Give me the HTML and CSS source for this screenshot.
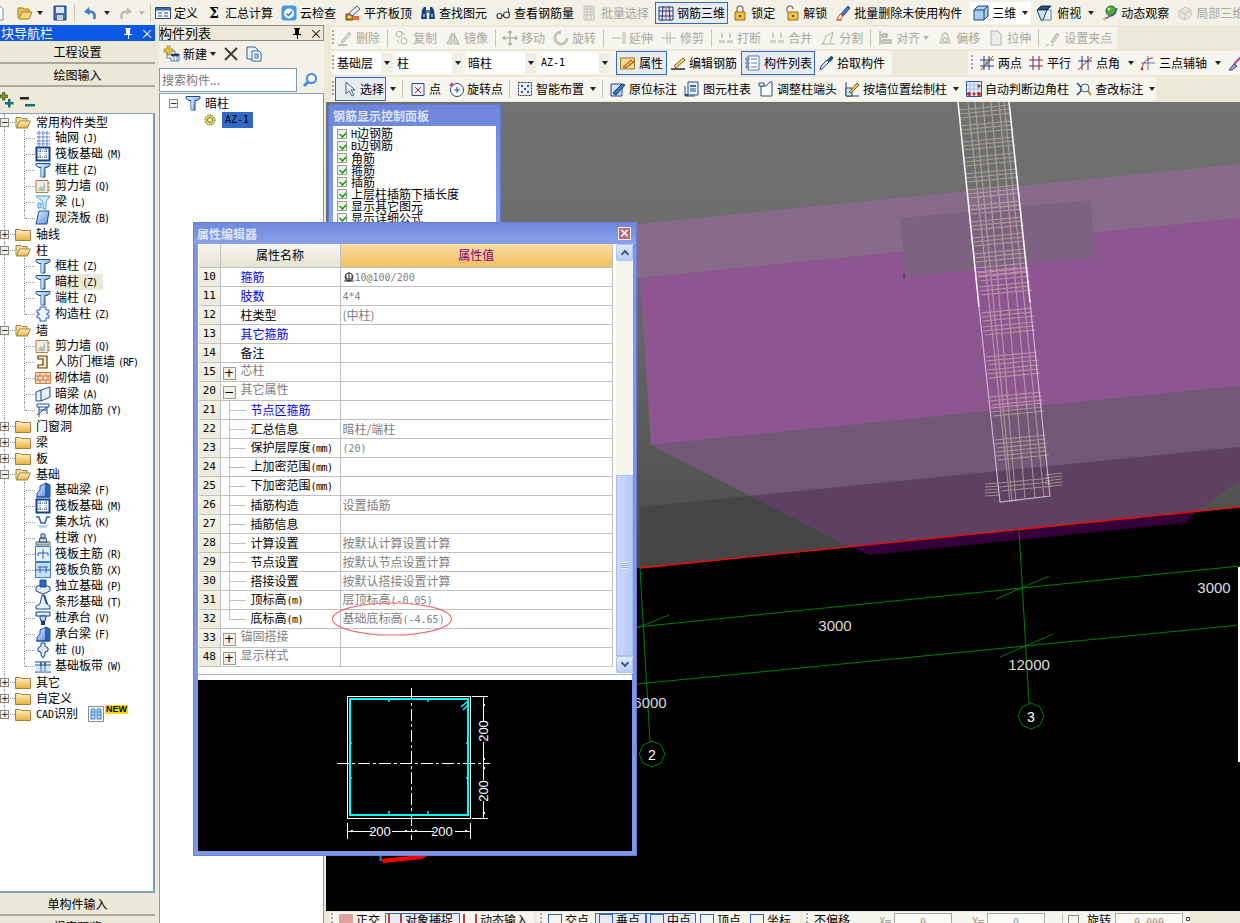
FILE: index.html
```html
<!DOCTYPE html>
<html lang="zh">
<head>
<meta charset="utf-8">
<title>钢筋三维</title>
<link rel="stylesheet" href="styles.css">
</head>
<body>
<svg class="defs" width="0" height="0">
<defs>
<linearGradient id="fy" x1="0" y1="0" x2="0" y2="1"><stop offset="0" stop-color="#fff3c4"/><stop offset="1" stop-color="#e8b040"/></linearGradient>
<linearGradient id="bl" x1="0" y1="0" x2="1" y2="1"><stop offset="0" stop-color="#e4f0fc"/><stop offset="1" stop-color="#5a90d8"/></linearGradient>
<g id="pinx"><path d="M3 1h6v1H8v5h2v1H7v4H6V8H2V7h2V2H3z" fill="currentColor"/></g>
<g id="new"><path d="M3 1h7l3 3v11H3z" fill="#fff" stroke="#7a8aa0"/></g>
<g id="open"><path d="M1 13V3h5l1 1h5v3" fill="#e8c060" stroke="#a07820"/><path d="M2 14l3-7h10l-3 7z" fill="#ffd97a" stroke="#a07820"/></g>
<g id="fc"><path d="M.5 3.500h5l1 1h9v10H.5z" fill="url(#fy)" stroke="#a08040"/></g>
<g id="fo"><path d="M1 13V3.500h5l1 1h5V7" fill="#f4dc9c" stroke="#a08040"/><path d="M1.500 14l3-7h11l-3 7z" fill="url(#fy)" stroke="#a08040"/></g>
<g id="save"><path d="M2 1h12v14H2z" fill="#3f6fb0" stroke="#1d3f7a"/><path d="M4 2h8v6H4z" fill="#dfe9f6"/><path d="M5 10h6v5H5z" fill="#c8d0dc"/></g>
<g id="undo"><path d="M12 14c2-5-1-9-7-7" fill="none" stroke="#3a7ac8" stroke-width="2.500"/><path d="M7 2L2 7l6 3z" fill="#3a7ac8"/></g>
<g id="redo"><path d="M4 14C2 9 5 5 11 7" fill="none" stroke="#bfbfb6" stroke-width="2.500"/><path d="M9 2l5 5-6 3z" fill="#bfbfb6"/></g>
<g id="def"><path d="M.5 2.500h15v11H.5z" fill="#f4f6fa" stroke="#2a4a80"/><path d="M1 3h14v2.500H1z" fill="#3a6cb0"/><path d="M3 8h4M3 11h4M9 8h4M9 11h4" stroke="#2a4a80"/></g>
<g id="cloud"><rect x=".5" y=".5" width="15" height="15" rx="3" fill="#3f9ae8"/><circle cx="8" cy="8.500" r="5" fill="#fff"/><path d="M5.500 8.500l2 2 3.500-4" fill="none" stroke="#1f70c8" stroke-width="1.500"/></g>
<g id="flat"><path d="M1 9h7v6H1z" fill="#c88a30" stroke="#704010"/><path d="M4 8l8-7 3 3-8 7z" fill="#e8eef8" stroke="#40608c"/><path d="M9 11h5v4H9z" fill="#e86a30"/><path d="M3 11h3v2H3z" fill="#f8e070"/></g>
<g id="bino"><path d="M2 5l2-3h2v3l1 9H1zM14 5l-2-3h-2v3l-1 9h6z" fill="#1f3f7a"/><path d="M6 5h4v3H6z" fill="#4f7ab8"/><path d="M3 9h2v3H3zM11 9h2v3h-2z" fill="#7fa4d8"/></g>
<g id="glass"><circle cx="4.500" cy="11" r="2.500" fill="#fff" stroke="#333" stroke-width="1.200"/><circle cx="11.500" cy="10" r="3" fill="#fff" stroke="#333" stroke-width="1.200"/><path d="M7 10.500h2M14 8l-1-5" stroke="#333" fill="none"/></g>
<g id="gbatch"><path d="M2 1h10v14H2z" fill="#e8e8e0" stroke="#c4c4bc"/><path d="M2 4h10M2 7h10M2 10h10M5 1v14M9 1v14" stroke="#c4c4bc"/></g>
<g id="rb"><path d="M1 2h14v13H1z" fill="none" stroke="#1f3a80"/><path d="M1 6h14M1 11h14M5 1l-1 15M11 1l1 15" stroke="#1f3a80"/><path d="M8 2v13" stroke="#b03030"/></g>
<g id="lock"><path d="M5 7V4a3 3 0 016 0v3" fill="none" stroke="#8a8a8a" stroke-width="1.500"/><path d="M3 7h10v8H3z" fill="#f0c050" stroke="#9a7010"/><path d="M8 10v2" stroke="#704000" stroke-width="2"/></g>
<g id="ulock"><path d="M3 7V4a3 3 0 016 0" fill="none" stroke="#8a8a8a" stroke-width="1.500"/><path d="M4 7h10v8H4z" fill="#f0c050" stroke="#9a7010"/><path d="M9 10v2" stroke="#704000" stroke-width="2"/></g>
<g id="bdel"><path d="M6 9l7-8 2 2-7 8z" fill="#4f7ad0" stroke="#1f3f90"/><path d="M2 14l3-5 3 2-3 4z" fill="#f8f0d0" stroke="#b06030"/><path d="M1 15h6" stroke="#d04040"/></g>
<g id="cube"><path d="M1 5l4-4h10v10l-4 4H1z" fill="#a8d0ec" stroke="#1f3f70"/><path d="M1 5h10v10M11 5l4-4" fill="none" stroke="#1f3f70"/></g>
<g id="cubt"><path d="M5 5h10v10H5z" fill="#eef5fc" stroke="#5080b0"/><path d="M1 5l4-4h10l-4 4z" fill="#1f4f80" stroke="#102f50"/><path d="M1 5h10l-4 10H5z" fill="#cfe4f6" stroke="#1f3f70"/></g>
<g id="orb"><circle cx="9" cy="6" r="5" fill="#50a838" stroke="#286018"/><circle cx="7" cy="4" r="1.500" fill="#c8e8a0"/><path d="M2 14C4 13 14 10 15 3" fill="none" stroke="#4060a0" stroke-width="1.500"/><circle cx="2.500" cy="14" r="1.500" fill="#e0c040"/></g>
<g id="l3d"><path d="M2 6l6-4 6 3v6l-6 4-6-3z" fill="#e6e6de" stroke="#c4c4bc"/><path d="M2 6l6 3 6-4M8 9v6" fill="none" stroke="#c4c4bc"/></g>
<g id="gdel"><path d="M4 12l8-10 2 2-8 9z" fill="#d8d8d0" stroke="#bcbcb4"/><path d="M1 15h9" stroke="#bcbcb4" stroke-width="2"/></g>
<g id="gcopy" fill="none" stroke="#b4b4ac"><circle cx="5" cy="4" r="3"/><circle cx="10" cy="11" r="3"/><path d="M8 2l3 3M3 10l2 3"/></g>
<g id="gmir" fill="#d8d8d0" stroke="#b4b4ac"><path d="M7 3L2 14h5zM9 3l5 11H9z"/></g>
<g id="gmov" fill="none" stroke="#b4b4ac" stroke-width="1.500"><path d="M8 1v14M1 8h14M6 3l2-2 2 2M6 13l2 2 2-2M3 6L1 8l2 2M13 6l2 2-2 2"/></g>
<g id="grot"><path d="M8 2a6 6 0 106 6" fill="none" stroke="#c4c4bc" stroke-width="3"/></g>
<g id="gext" fill="none" stroke="#b4b4ac"><path d="M2 8h9M13 2v12M15 2v12"/></g>
<g id="gtrm" fill="none" stroke="#b4b4ac"><path d="M1 8h14M6 2v12M9 2v12"/></g>
<g id="gbrk" fill="#d0d0c8"><path d="M1 10h6v3H1zM9 10h6v3H9zM3 3h2v5H3zM11 3h2v5h-2z"/></g>
<g id="gspl" fill="none" stroke="#b4b4ac"><path d="M1 14h14M3 14l3-8 7-4-3 12"/></g>
<g id="galn" fill="none" stroke="#b4b4ac" stroke-width="1.500"><path d="M3 1v14"/><path d="M5 4h5v3H5zM5 10h9v3H5z" fill="#d8d8d0"/></g>
<g id="goff" fill="none" stroke="#c4c4bc" stroke-width="1.500"><path d="M3 13l3-9a3 3 0 014 0l3 9z"/><circle cx="8" cy="10" r="2"/></g>
<g id="gstr" fill="#ececec" stroke="#b4b4ac"><path d="M3 1h7l3 3v11H3z"/></g>
<g id="ggrp" fill="none" stroke="#b4b4ac"><path d="M1 15h3M6 15h3"/><path d="M6 12l6-9 2 2-6 8z" fill="#d8d8d0"/></g>
<g id="prop"><path d="M.5 3h14v11H.5z" fill="#f8dc94" stroke="#a07820"/><path d="M3 12l8-7 3 2-8 6z" fill="#f0a040" stroke="#806020"/></g>
<g id="edit"><path d="M4 11l9-8 2 2-9 8z" fill="#f4d070" stroke="#806020"/><path d="M1 14h14" stroke="#222" stroke-width="1.500"/></g>
<g id="lst"><path d="M3 1h11v14H3z" fill="#fff" stroke="#5878a8"/><path d="M1 3h3v2H1zM1 7h3v2H1zM1 11h3v2H1z" fill="#c8d8f0" stroke="#5878a8"/><path d="M6 4h6M6 8h6M6 12h6" stroke="#5878a8"/></g>
<g id="pick"><path d="M2 15l1-4 6-6 2 2-6 6z" fill="#d0e4f8" stroke="#1f4f90"/><path d="M9 5l3-3a1.500 1.500 0 013 2l-3 3z" fill="#1f4f90"/></g>
<g id="p2" fill="none"><path d="M5 1v14M10 1v14M1 5h14M1 11h14" stroke="#2a3a90"/><path d="M2 15L14 1" stroke="#c02020"/><circle cx="8" cy="8" r="1.700" fill="#60a030"/></g>
<g id="par" fill="none"><path d="M1 5h14M1 11h14" stroke="#c02020"/><path d="M5 1v14M11 1v14" stroke="#2a3a90"/></g>
<g id="ang" fill="none"><path d="M5 1v14M11 1v14M1 6h14" stroke="#2a3a90"/><path d="M1 15L15 2" stroke="#c02020"/></g>
<g id="p3" fill="none"><path d="M2 15C2 8 7 3 13 3" stroke="#c02020"/><path d="M8 1v14M1 8h14" stroke="#2a3a90" stroke-width=".7"/><circle cx="2" cy="14" r="1.300" fill="#c02020"/></g>
<g id="cut2"><path d="M2 15l5-6 3 2-5 4z" fill="#a0b0e0" stroke="#2a3a90"/><path d="M7 9l7-7" stroke="#c040a0" stroke-width="2"/></g>
<g id="cur"><path d="M5 1v12l3-3 3 5 2-1-3-5h4z" fill="#f4f4f4" stroke="#40608c"/></g>
<g id="pt"><path d="M2 2.500h12v12H2z" fill="#eef4fc" stroke="#2a4a90"/><path d="M5 6l6 6M11 6l-6 6" stroke="#c02020"/></g>
<g id="rot"><circle cx="9" cy="9" r="6.500" fill="#fff" stroke="#1f3f80"/><path d="M9 6v6M6 9h6" stroke="#1f3f80"/><path d="M1 5l3-4 2 4z" fill="#d04040"/></g>
<g id="sm"><path d="M1.500 1.500h13v13h-13z" fill="#e8f0fa" stroke="#333" stroke-dasharray="2 1"/><path d="M4 4h2v2H4zM10 4h2v2h-2zM7 7h2v2H7zM4 10h2v2H4zM10 10h2v2h-2z" fill="#2a5aa0"/></g>
<g id="pos"><path d="M1 3h11v12H1z" fill="#d0e4f8" stroke="#1f3f80"/><path d="M3 12l9-9 3 1-9 10z" fill="#3080d0" stroke="#103060"/></g>
<g id="tbl"><path d="M4 1h10v13H4z" fill="#eaf2fc" stroke="#2a4a90"/><path d="M6 4h6v2H6z" fill="#3a6cb0"/><path d="M6 8h6M6 10h6" stroke="#2a4a90"/><path d="M1 5v10h10" fill="none" stroke="#2a4a90"/><path d="M1 13h3v2H1z" fill="#2a4a90"/></g>
<g id="adj"><path d="M3 5h5l4-4h2v14H3z" fill="#fff" stroke="#1f4a90"/><path d="M1 2h5v3H1z" fill="#fff" stroke="#1f4a90"/></g>
<g id="wal"><path d="M2 1v14h13" fill="none" stroke="#1f3f80"/><path d="M2 7h6v8H2z" fill="#d8e8f8" stroke="#1f3f80"/><path d="M5 11l8-9 2 2-8 8z" fill="#f0c050" stroke="#806020"/></g>
<g id="auto"><path d="M.5.5h15v15H.5z" fill="#eaf2fc" stroke="#2a5aa0"/><path d="M1 4h14M1 8h14M1 12h14M4 1v14M8 1v14M12 1v14" stroke="#9ab8e0"/><circle cx="3" cy="13" r="2" fill="#d02020"/><circle cx="13" cy="13" r="2" fill="#d02020"/><circle cx="8" cy="13" r="1.500" fill="#d02020"/><circle cx="13" cy="5" r="1.500" fill="#d02020"/></g>
<g id="chk"><path d="M1 2l4 4v4l-4 4" fill="none" stroke="#1f3f90" stroke-width="1.500"/><circle cx="9" cy="7" r="4" fill="#dff" stroke="#555"/><path d="M12 10l3 4" stroke="#c08030" stroke-width="2"/></g>
<g id="plusg"><path d="M0 3h2.500V.5H5V3h2.500v2.500H5V8H2.500V5.500H0z" fill="#7a9a20" stroke="#203010" stroke-width=".6"/><path d="M5 10h3V7h2.500v3h3v2.500h-3v3H8v-3H5z" fill="#0f7070"/></g>
<g id="mins"><path d="M1 5h9v2.500H1z" fill="#222"/><path d="M6 12h10v2.500H6z" fill="#0f7070"/></g>
<g id="col"><path d="M1 1.500h14v2l-3 2h-2v9.500H6V5.500H4l-3-2z" fill="url(#bl)" stroke="#1a4aa0"/><path d="M7 5.500V15" stroke="#fff"/></g>
<g id="gri" stroke="#2a5ac0" fill="none"><path d="M2 3h13M2 7h13M2 11h13M2 14h13M4 1v15M8 1v15M12 1v15" stroke-dasharray="1.500 .8"/></g>
<g id="raf" fill="none" stroke="#10408a"><path d="M1.500 1.500h13v13h-13z" stroke-width="2"/><path d="M5 3v10M11 3v10M3 5h10M3 11h10" stroke-dasharray="1 1"/></g>
<g id="wl"><path d="M1 2.500h12v12H1z" fill="#eeeae4" stroke="#c07840"/><path d="M3 13l2-5 2 2 3-6v9z" fill="#a8a8a8" opacity=".7"/><path d="M13 5h2M13 9h2M13 12h2" stroke="#c07840"/></g>
<g id="bm"><path d="M1 2h14l-4 6v7H8V8z" fill="#d4eafa" stroke="#4aa0d0"/><path d="M3 9h3v5H3z" fill="#cde" stroke="#4aa0d0"/></g>
<g id="slb"><path d="M4 1h10l-2 13H1z" fill="url(#bl)" stroke="#1a4aa0"/></g>
<g id="gz"><path d="M5 1h6v3h3v3h-2v2h2v3h-3v3H5v-3H2V9h2V7H2V4h3z" fill="#eef4fc" stroke="#2a5ac0"/></g>
<g id="frm"><path d="M3 2h9v12H3v-3h5V5H3z" fill="#f8e8c0" stroke="#5a3a10" stroke-width="1.200"/></g>
<g id="brk" fill="#f8e0c8" stroke="#d07838"><path d="M.5 2.500h15v11H.5zM.5 6h15M.5 10h15M5 2.500V6M11 2.500V6M8 6v4M3 6v4M13 6v4M5 10v3.500M11 10v3.500"/></g>
<g id="hbm"><path d="M1 6l5-2 9-3v10l-9 4H1z" fill="#e4eef8" stroke="#2a4a80"/><path d="M6 4v11" stroke="#2a4a80"/></g>
<g id="rf" fill="none" stroke="#1a4aa0"><path d="M2 2h12v3H2zM4 5v10M12 5v7M2 13l10-8M4 8h8"/></g>
<g id="fbm"><path d="M2 15v-4l3-3V4l6-3v14z" fill="url(#bl)" stroke="#1a4aa0"/><path d="M11 1l4 2v12h-4z" fill="#2a6ac0" stroke="#1a4aa0"/><path d="M1 15h14" stroke="#1a4aa0"/></g>
<g id="pit"><path d="M1 3h3l2 6h4l2-6h3" fill="none" stroke="#2a5ac0" stroke-width="1.500"/><path d="M2 11h12l-3 3H5z" fill="#bcd4f0"/></g>
<g id="pr"><path d="M1 12h14v3H1z" fill="#c8c8c8" stroke="#666"/><path d="M5 8h6l1 4H4zM6 4h4v4H6z" fill="#c0d8f0" stroke="#2a4a80"/></g>
<g id="mn"><path d="M.5.5h15v15H.5z" fill="#eaf2fc" stroke="#3a7ad0"/><path d="M8 3v10M3 7h10M3 7v3M13 7v3" stroke="#2a5ac0" fill="none"/></g>
<g id="ng"><path d="M.5.5h15v15H.5z" fill="#c8dcf4" stroke="#3a7ad0"/><path d="M1 8h14M5 5v6M11 5v6M3 5h10" stroke="#2a5ac0" fill="none"/></g>
<g id="ind"><path d="M1 9l6-3 8 3v4l-7 3-7-3z" fill="#e4eef8" stroke="#1a4aa0"/><path d="M5 2h6v7H5z" fill="#2a6ac0" stroke="#1a4aa0"/></g>
<g id="stp"><path d="M1 15v-3l4-2 2-9h2l3 9 3 2v3z" fill="#e8f2fc" stroke="#1a4aa0"/><path d="M9 1l3 9" stroke="#1a4aa0" stroke-width="2"/></g>
<g id="cap"><path d="M1 2h14v4H1z" fill="#e4eef8" stroke="#10408a"/><path d="M5 6h6v2l-1 3H6L5 8z" fill="#bcd4f0" stroke="#10408a"/><path d="M6 11h4v4H6z" fill="#10408a"/></g>
<g id="pl"><path d="M6 1h4v3l3 2v3l-3 1v3l-2 3-2-3v-3L3 9V6l3-2z" fill="#dce8f8" stroke="#10408a"/></g>
<g id="bnd"><path d="M0 4h16M0 7h16M0 14h16" stroke="#10408a"/><path d="M6 4v10M10 4v10" stroke="#2a6ac0" stroke-width="2"/><path d="M1 8h14v6H1z" fill="#bcd4f0" opacity=".6"/></g>
<g id="cad"><path d="M.5.5h15v15H.5z" fill="#fff" stroke="#888"/><path d="M3 3h4v10H3zM9 3h4v10H9z" fill="#bcd8f4" stroke="#3a7ad0"/><path d="M3 6h4M3 9h4M9 6h4M9 9h4" stroke="#3a7ad0"/></g>
<g id="gear"><circle cx="8" cy="8" r="5" fill="#f4e040" stroke="#444" stroke-dasharray="1.500 1"/><circle cx="8" cy="8" r="2.500" fill="#fff8a0" stroke="#666"/></g>
<g id="mnew"><path d="M3 5h8v3h4v7H7v-3H3z" fill="#fff" stroke="#5878a8"/><path d="M7 8h8v2H7zM10 10v5M13 10v5" stroke="#5878a8"/><path d="M3 0h3v3h3v3H6v3H3V6H0V3h3z" fill="#e8c030" stroke="#907010" stroke-width=".6"/></g>
<g id="xx"><path d="M2 2l12 12M14 2L2 14" stroke="#404040" stroke-width="2"/></g>
<g id="cpy"><path d="M1 1h8l3 3v9H1z" fill="#eaf2fc" stroke="#3060a0"/><path d="M6 5h7l2 2v8H6z" fill="#fff" stroke="#3060a0"/><path d="M8 8h5M8 10h5M8 12h5" stroke="#3060a0"/></g>
<g id="srch"><circle cx="9.500" cy="6.500" r="4.500" fill="#fff" stroke="#3a8ae0" stroke-width="2"/><path d="M6 10l-4 4" stroke="#3a8ae0" stroke-width="3"/></g>
</defs>
</svg>

<div class="app">

  <header class="top">
    <svg class="ic first"><use href="#new"/></svg>
    <svg class="ic q-open"><use href="#open"/></svg><i class="dd q-d1"></i>
    <svg class="ic q-save"><use href="#save"/></svg><i class="sep q-s1"></i>
    <svg class="ic q-undo"><use href="#undo"/></svg><i class="dd q-d2"></i>
    <svg class="ic q-redo"><use href="#redo"/></svg><i class="dd dim q-d3"></i><i class="sep q-s2"></i>
    <span class="it q-def"><svg class="ic"><use href="#def"/></svg>定义</span>
    <span class="it q-sig"><b class="sig">Σ</b>汇总计算</span>
    <span class="it"><svg class="ic"><use href="#cloud"/></svg>云检查</span>
    <span class="it q-g9"><svg class="ic"><use href="#flat"/></svg>平齐板顶</span>
    <span class="it"><svg class="ic"><use href="#bino"/></svg>查找图元</span>
    <span class="it"><svg class="ic"><use href="#glass"/></svg>查看钢筋量</span>
    <span class="it dis"><svg class="ic"><use href="#gbatch"/></svg>批量选择</span>
    <span class="it on q-on"><svg class="ic"><use href="#rb"/></svg>钢筋三维</span>
    <span class="it q-g4"><svg class="ic"><use href="#lock"/></svg>锁定</span>
    <span class="it q-g9"><svg class="ic"><use href="#ulock"/></svg>解锁</span>
    <span class="it"><svg class="ic"><use href="#bdel"/></svg>批量删除未使用构件</span>
    <span class="it box"><svg class="ic"><use href="#cube"/></svg>三维<i class="dd"></i></span>
    <span class="it fus"><svg class="ic"><use href="#cubt"/></svg>俯视<i class="dd"></i></span>
    <span class="it q-g5"><svg class="ic"><use href="#orb"/></svg>动态观察</span>
    <span class="it dis"><svg class="ic"><use href="#l3d"/></svg>局部三维</span>
  </header>

  <div class="main">
    <aside class="nav">
      <div class="cap blue"><span class="cap-t clip">块导航栏</span><svg class="pin"><use href="#pinx"/></svg><span class="cls">×</span></div>
      <div class="navbtn">工程设置</div>
      <div class="navbtn">绘图输入</div>
      <div class="navtools"><svg class="ic"><use href="#plusg"/></svg><svg class="ic"><use href="#mins"/></svg></div>
      <div class="tree">
        <div class="root"><i class="ex">−</i><svg class="ic"><use href="#fo"/></svg><span>常用构件类型</span></div>
        <div class="kids">
          <div class="leaf"><svg class="ic"><use href="#gri"/></svg><span>轴网<em>(J)</em></span></div>
          <div class="leaf"><svg class="ic"><use href="#raf"/></svg><span>筏板基础<em>(M)</em></span></div>
          <div class="leaf"><svg class="ic"><use href="#col"/></svg><span>框柱<em>(Z)</em></span></div>
          <div class="leaf"><svg class="ic"><use href="#wl"/></svg><span>剪力墙<em>(Q)</em></span></div>
          <div class="leaf"><svg class="ic"><use href="#bm"/></svg><span>梁<em>(L)</em></span></div>
          <div class="leaf"><svg class="ic"><use href="#slb"/></svg><span>现浇板<em>(B)</em></span></div>
        </div>
        <div class="root"><i class="ex">+</i><svg class="ic"><use href="#fc"/></svg><span>轴线</span></div>
        <div class="root"><i class="ex">−</i><svg class="ic"><use href="#fo"/></svg><span>柱</span></div>
        <div class="kids">
          <div class="leaf"><svg class="ic"><use href="#col"/></svg><span>框柱<em>(Z)</em></span></div>
          <div class="leaf"><svg class="ic"><use href="#col"/></svg><span class="cur">暗柱<em>(Z)</em></span></div>
          <div class="leaf"><svg class="ic"><use href="#col"/></svg><span>端柱<em>(Z)</em></span></div>
          <div class="leaf"><svg class="ic"><use href="#gz"/></svg><span>构造柱<em>(Z)</em></span></div>
        </div>
        <div class="root"><i class="ex">−</i><svg class="ic"><use href="#fo"/></svg><span>墙</span></div>
        <div class="kids">
          <div class="leaf"><svg class="ic"><use href="#wl"/></svg><span>剪力墙<em>(Q)</em></span></div>
          <div class="leaf"><svg class="ic"><use href="#frm"/></svg><span>人防门框墙<em>(RF)</em></span></div>
          <div class="leaf"><svg class="ic"><use href="#brk"/></svg><span>砌体墙<em>(Q)</em></span></div>
          <div class="leaf"><svg class="ic"><use href="#hbm"/></svg><span>暗梁<em>(A)</em></span></div>
          <div class="leaf"><svg class="ic"><use href="#rf"/></svg><span>砌体加筋<em>(Y)</em></span></div>
        </div>
        <div class="root"><i class="ex">+</i><svg class="ic"><use href="#fc"/></svg><span>门窗洞</span></div>
        <div class="root"><i class="ex">+</i><svg class="ic"><use href="#fc"/></svg><span>梁</span></div>
        <div class="root"><i class="ex">+</i><svg class="ic"><use href="#fc"/></svg><span>板</span></div>
        <div class="root"><i class="ex">−</i><svg class="ic"><use href="#fo"/></svg><span>基础</span></div>
        <div class="kids">
          <div class="leaf"><svg class="ic"><use href="#fbm"/></svg><span>基础梁<em>(F)</em></span></div>
          <div class="leaf"><svg class="ic"><use href="#raf"/></svg><span>筏板基础<em>(M)</em></span></div>
          <div class="leaf"><svg class="ic"><use href="#pit"/></svg><span>集水坑<em>(K)</em></span></div>
          <div class="leaf"><svg class="ic"><use href="#pr"/></svg><span>柱墩<em>(Y)</em></span></div>
          <div class="leaf"><svg class="ic"><use href="#mn"/></svg><span>筏板主筋<em>(R)</em></span></div>
          <div class="leaf"><svg class="ic"><use href="#ng"/></svg><span>筏板负筋<em>(X)</em></span></div>
          <div class="leaf"><svg class="ic"><use href="#ind"/></svg><span>独立基础<em>(P)</em></span></div>
          <div class="leaf"><svg class="ic"><use href="#stp"/></svg><span>条形基础<em>(T)</em></span></div>
          <div class="leaf"><svg class="ic"><use href="#cap"/></svg><span>桩承台<em>(V)</em></span></div>
          <div class="leaf"><svg class="ic"><use href="#fbm"/></svg><span>承台梁<em>(F)</em></span></div>
          <div class="leaf"><svg class="ic"><use href="#pl"/></svg><span>桩<em>(U)</em></span></div>
          <div class="leaf"><svg class="ic"><use href="#bnd"/></svg><span>基础板带<em>(W)</em></span></div>
        </div>
        <div class="root"><i class="ex">+</i><svg class="ic"><use href="#fc"/></svg><span>其它</span></div>
        <div class="root"><i class="ex">+</i><svg class="ic"><use href="#fc"/></svg><span>自定义</span></div>
        <div class="root last"><i class="ex">+</i><svg class="ic"><use href="#fc"/></svg><span><em class="plain">CAD</em>识别</span><svg class="ic cadic"><use href="#cad"/></svg><b class="newb">NEW</b></div>
      </div>
      <div class="navbtn low">单构件输入</div>
      <div class="navbtn low">报表预览</div>
    </aside>

    <section class="list">
      <div class="cap grey"><span class="cap-t">构件列表</span><svg class="pin"><use href="#pinx"/></svg><span class="cls">×</span></div>
      <div class="listtools">
        <span class="it"><svg class="ic"><use href="#mnew"/></svg>新建<i class="dd"></i></span>
        <svg class="ic"><use href="#xx"/></svg>
        <svg class="ic"><use href="#cpy"/></svg>
      </div>
      <div class="search"><div class="sinput">搜索构件...</div><svg class="ic sbtn"><use href="#srch"/></svg></div>
      <div class="ltree">
        <div class="lroot"><i class="ex">−</i><svg class="ic"><use href="#col"/></svg><span>暗柱</span></div>
        <div class="lkid"><svg class="ic gearic"><use href="#gear"/></svg><span class="sel"><em>AZ-1</em></span></div>
      </div>
    </section>

    <section class="work">
      <div class="bars">
        <div class="tb r2 dis">
          <i class="grip"></i>
          <span class="it"><svg class="ic"><use href="#gdel"/></svg>删除</span><i class="sep"></i>
          <span class="it"><svg class="ic"><use href="#gcopy"/></svg>复制</span>
          <span class="it"><svg class="ic"><use href="#gmir"/></svg>镜像</span><i class="sep"></i>
          <span class="it"><svg class="ic"><use href="#gmov"/></svg>移动</span>
          <span class="it"><svg class="ic"><use href="#grot"/></svg>旋转</span><i class="sep"></i>
          <span class="it"><svg class="ic"><use href="#gext"/></svg>延伸</span>
          <span class="it"><svg class="ic"><use href="#gtrm"/></svg>修剪</span><i class="sep"></i>
          <span class="it"><svg class="ic"><use href="#gbrk"/></svg>打断</span>
          <span class="it"><svg class="ic"><use href="#gbrk"/></svg>合并</span>
          <span class="it"><svg class="ic"><use href="#gspl"/></svg>分割</span><i class="sep"></i>
          <span class="it"><svg class="ic"><use href="#galn"/></svg>对齐<i class="dd dim"></i></span>
          <span class="it"><svg class="ic"><use href="#goff"/></svg>偏移</span>
          <span class="it"><svg class="ic"><use href="#gstr"/></svg>拉伸</span><i class="sep"></i>
          <span class="it"><svg class="ic"><use href="#ggrp"/></svg>设置夹点</span>
        </div>
        <div class="rowpair">
          <div class="tb r3">
            <i class="grip"></i>
            <div class="combo c1">基础层<i class="cb"><i class="dd"></i></i></div>
            <div class="combo c2">柱<i class="cb"><i class="dd"></i></i></div>
            <div class="combo c3">暗柱<i class="cb"><i class="dd"></i></i></div>
            <div class="combo c4"><em>AZ-1</em><i class="cb"><i class="dd"></i></i></div>
            <span class="it on w51"><svg class="ic"><use href="#prop"/></svg>属性</span>
            <span class="it"><svg class="ic"><use href="#edit"/></svg>编辑钢筋</span>
            <span class="it on w74"><svg class="ic"><use href="#lst"/></svg>构件列表</span>
            <span class="it"><svg class="ic"><use href="#pick"/></svg>拾取构件</span>
          </div>
          <div class="tb r3b">
            <i class="grip"></i>
            <span class="it"><svg class="ic"><use href="#p2"/></svg>两点</span>
            <span class="it"><svg class="ic"><use href="#par"/></svg>平行</span>
            <span class="it"><svg class="ic"><use href="#ang"/></svg>点角<i class="dd"></i></span>
            <span class="it"><svg class="ic"><use href="#p3"/></svg>三点辅轴<i class="dd"></i></span>
            <svg class="ic"><use href="#cut2"/></svg>
          </div>
        </div>
        <div class="tb r4">
          <i class="grip"></i>
          <span class="it on sel1"><svg class="ic"><use href="#cur"/></svg>选择</span><i class="dd sd"></i><i class="sep"></i>
          <span class="it"><svg class="ic"><use href="#pt"/></svg>点</span>
          <span class="it"><svg class="ic"><use href="#rot"/></svg>旋转点</span><i class="sep"></i>
          <span class="it"><svg class="ic"><use href="#sm"/></svg>智能布置<i class="dd"></i></span><i class="sep"></i>
          <span class="it"><svg class="ic"><use href="#pos"/></svg>原位标注</span>
          <span class="it"><svg class="ic"><use href="#tbl"/></svg>图元柱表</span>
          <span class="it"><svg class="ic"><use href="#adj"/></svg>调整柱端头</span>
          <span class="it"><svg class="ic"><use href="#wal"/></svg>按墙位置绘制柱<i class="dd"></i></span>
          <span class="it"><svg class="ic"><use href="#auto"/></svg>自动判断边角柱</span>
          <span class="it"><svg class="ic"><use href="#chk"/></svg>查改标注<i class="dd"></i></span>
        </div>
      </div>

      <div class="canvas">
        <svg class="scene" viewBox="326 102 914 809" width="914" height="809">
          <defs>
            <linearGradient id="gbg" x1="0" y1="0" x2="0" y2="1"><stop offset="0" stop-color="#717171"/><stop offset=".35" stop-color="#6c6c6c"/><stop offset=".75" stop-color="#555"/><stop offset="1" stop-color="#464646"/></linearGradient>
          </defs>
          <rect x="326" y="102" width="914" height="809" fill="#000"/>
          <polygon points="326,102 1240,102 1240,507 326,600" fill="url(#gbg)"/>
          <polygon points="326,255 1240,164 1240,218 326,309" fill="#886b8b"/>
          <polygon points="640,278 1240,218 1240,386 651,445" fill="#8e5690"/>
          <polygon points="651,445 1240,386 1240,447 750,496" fill="#735776"/>
          <polygon points="640,507 750,496 850,547 640,568" fill="#454545"/>
          <polygon points="750,496 1240,447 1240,480 1197,511 850,547" fill="#5e4160"/>
          <polygon points="850,547 1197,511 1185,523 870,555" fill="#35003a"/>
          <polygon points="901,218 1091,200 1094,257 905,277" fill="#7d6281"/>
          <path d="M904 273v6" stroke="#6a3a70" stroke-width="2"/>
          <g class="rebar">
            <path d="M968 102l42 400M975 102l37 400M983 102l33 400M991 102l34 396M999 102l36 396M1004 102l40 395"/>
            <path id="stir" d="M958.800 110l51-5M960.500 126l51-5M962.200 142l51-5M963.900 158l51-5M965.600 174l51-5M967.200 190l51-5M968.900 206l51-5M970.600 222l51-5M972.300 238l51-5M974 254l51-5M975.500 268l51-5M977.700 273l51-5M979.400 287l51-5M981.500 313l51-5M982.900 327l51-5M986 357l51-5M987.300 370l51-5M990 397l51-5M991.100 408l51-5M994.500 440l51-5M995.800 452l51-5M999 483l51-5"/>
            <use href="#stir" x="0" y="4"/>
            <use href="#stir" x="2" y="8"/>
            <path d="M985 484l14-1M985 487l14-1M985 490l14-1M985 493l14-1M985 496l15-1M1045 475l17-2M1045 478l17-2M1045 481l17-2M1045 484l17-2M1045 487l17-2"/>
          </g>
          <path d="M979 307L1000 502l50-6L1030 302" class="edge"/>
          <path d="M958 102l21 205M1009 102l21 200" class="edgew"/>
          <path d="M640 568L1240 507" stroke="#f00" stroke-width="1.300"/>
          <g class="axis">
            <path d="M640 568l10 174M1019 530l10 173"/>
            <path d="M637 627L1240 566M637 684L1240 625"/>
            <path d="M637 628l32-13M996 599l53-23M1000 657l53-23"/>
            <polygon points="652,741 661,745 665,754 661,763 652,767 643,763 639,754 643,745"/>
            <polygon points="1031,703 1040,707 1044,716 1040,725 1031,729 1022,725 1018,716 1022,707"/>
          </g>
          <g class="nums">
            <text x="835" y="631">3000</text>
            <text x="1214" y="593">3000</text>
            <text x="1029" y="670">12000</text>
            <text x="650" y="708">6000</text>
            <text x="652" y="760" class="ax">2</text>
            <text x="1031" y="722" class="ax">3</text>
          </g>
          <polygon points="381,859 430,854 422,859 383,863" fill="#f00"/>
          <path d="M380.500 855v6" stroke="#08c" stroke-width="2"/>
          <path d="M1239 567v195" stroke="#fff" stroke-width="2"/>
        </svg>
      </div>

      <div class="status">
        <div class="tb s1">
          <i class="grip"></i>
          <span class="it"><span class="sq pk"></span>正交</span>
          <span class="it on w75"><span class="sq rd"></span>对象捕捉</span>
          <span class="it"><span class="sq rd"></span>动态输入</span>
        </div>
        <div class="tb s2">
          <i class="grip"></i>
          <span class="it st1"><span class="sq bl"></span>交点</span>
          <span class="it on st2"><span class="sq bl"></span>垂点</span>
          <span class="it on st3"><span class="sq bl"></span>中点</span>
          <span class="it st4"><span class="sq bl"></span>顶点</span>
          <span class="it st5"><span class="sq bl"></span>坐标</span>
        </div>
        <div class="tb s3">
          <i class="grip"></i>
          <span class="it sbox">不偏移</span>
          <span class="lab l1"><em>X=</em></span><span class="num"><em>0</em></span>
          <span class="lab l2"><em>Y=</em></span><span class="num"><em>0</em></span>
          <i class="sep"></i><span class="cbx"></span>
          <span class="rlab">旋转</span><span class="num wide2"><em>0.000</em></span><span class="tick"></span>
        </div>
      </div>
    </section>
  </div>

  <div class="panel">
    <div class="ptitle">钢筋显示控制面板</div>
    <ul class="plist">
      <li><i class="chk"></i><span><em>H</em>边钢筋</span></li>
      <li><i class="chk"></i><span><em>B</em>边钢筋</span></li>
      <li><i class="chk"></i><span>角筋</span></li>
      <li><i class="chk"></i><span>箍筋</span></li>
      <li><i class="chk"></i><span>插筋</span></li>
      <li><i class="chk"></i><span>上层柱插筋下插长度</span></li>
      <li><i class="chk"></i><span>显示其它图元</span></li>
      <li><i class="chk"></i><span>显示详细公式</span></li>
    </ul>
  </div>

  <div class="dlg">
    <div class="dtitle"><span>属性编辑器</span><i class="dclose">×</i></div>
    <div class="dbody">
      <div class="tblwrap">
        <table class="props">
          <colgroup><col class="c-n"><col class="c-a"><col class="c-v"></colgroup>
          <thead><tr><th></th><th>属性名称</th><th class="hv">属性值</th></tr></thead>
          <tbody>
            <tr><td class="n">10</td><td class="a"><span class="b">箍筋</span></td><td class="v"><svg class="steel" viewBox="0 0 10 10"><circle cx="5" cy="5" r="4" fill="none" stroke="#333"/><path d="M5 0v10M2 3v4h6V3M0 9h10" stroke="#333" fill="none"/></svg><em>10@100/200</em></td></tr>
            <tr><td class="n">11</td><td class="a"><span class="b">肢数</span></td><td class="v"><em>4*4</em></td></tr>
            <tr><td class="n">12</td><td class="a"><span>柱类型</span></td><td class="v">(中柱)</td></tr>
            <tr><td class="n">13</td><td class="a"><span class="b">其它箍筋</span></td><td class="v"></td></tr>
            <tr><td class="n">14</td><td class="a"><span>备注</span></td><td class="v"></td></tr>
            <tr><td class="n">15</td><td class="g"><i class="pm">+</i><span>芯柱</span></td><td class="v"></td></tr>
            <tr><td class="n">20</td><td class="g"><i class="pm">−</i><span>其它属性</span></td><td class="v"></td></tr>
            <tr><td class="n">21</td><td class="k"><span class="b">节点区箍筋</span></td><td class="v"></td></tr>
            <tr><td class="n">22</td><td class="k"><span>汇总信息</span></td><td class="v">暗柱/端柱</td></tr>
            <tr><td class="n">23</td><td class="k"><span>保护层厚度<em>(mm)</em></span></td><td class="v"><em>(20)</em></td></tr>
            <tr><td class="n">24</td><td class="k"><span>上加密范围<em>(mm)</em></span></td><td class="v"></td></tr>
            <tr><td class="n">25</td><td class="k"><span>下加密范围<em>(mm)</em></span></td><td class="v"></td></tr>
            <tr><td class="n">26</td><td class="k"><span>插筋构造</span></td><td class="v">设置插筋</td></tr>
            <tr><td class="n">27</td><td class="k"><span>插筋信息</span></td><td class="v"></td></tr>
            <tr><td class="n">28</td><td class="k"><span>计算设置</span></td><td class="v">按默认计算设置计算</td></tr>
            <tr><td class="n">29</td><td class="k"><span>节点设置</span></td><td class="v">按默认节点设置计算</td></tr>
            <tr><td class="n">30</td><td class="k"><span>搭接设置</span></td><td class="v">按默认搭接设置计算</td></tr>
            <tr><td class="n">31</td><td class="k"><span>顶标高<em>(m)</em></span></td><td class="v">层顶标高<em>(-0.05)</em></td></tr>
            <tr><td class="n">32</td><td class="k end"><span>底标高<em>(m)</em></span></td><td class="v">基础底标高<em>(-4.65)</em></td></tr>
            <tr><td class="n">33</td><td class="g"><i class="pm">+</i><span>锚固搭接</span></td><td class="v"></td></tr>
            <tr><td class="n">48</td><td class="g"><i class="pm">+</i><span>显示样式</span></td><td class="v"></td></tr>
          </tbody>
        </table>
        <div class="vscroll">
          <div class="sb"><i class="up"></i></div>
          <div class="track"></div>
          <div class="thumb"><i class="gr"></i></div>
          <div class="sb"><i class="down"></i></div>
        </div>
      </div>
      <svg class="preview" viewBox="198 680 434 171" width="434" height="171">
        <rect x="198" y="680" width="434" height="171" fill="#000"/>
        <g stroke="#fff" fill="none">
          <rect x="347.500" y="696.500" width="123" height="122"/>
          <path d="M411.500 688v152M337 763.500h153" stroke-dasharray="12 3 3 3"/>
          <path d="M472 696.500h16M472 818.500h16M483.500 696.500V721M483.500 742v38M483.500 801v18"/>
          <path d="M347.500 823v16M470.500 823v16M347.500 831.500H372M392 831.500h42M455 831.500h16"/>
        </g>
        <rect x="350" y="699" width="118" height="116" fill="none" stroke="#0ff" stroke-width="2"/>
        <path d="M461 707l7-6M463 710l6-6M389 700v2M428 700v2M350 743h2M466 743h2M350 778h2M466 778h2M389 811v3M428 811v3" stroke="#0ff" stroke-width="1.500"/>
        <path d="M483 704h2v2h-2zM483 758h2v2h-2zM483 767h2v2h-2zM483 812h2v2h-2zM351 830h2v2h-2zM405 830h2v2h-2zM415 830h2v2h-2zM465 830h2v2h-2z" fill="#fff"/>
        <g class="dim">
          <text x="380" y="836">200</text>
          <text x="442" y="836">200</text>
          <text transform="translate(488 731) rotate(-90)">200</text>
          <text transform="translate(488 791) rotate(-90)">200</text>
        </g>
      </svg>
    </div>
    <svg class="oval" width="122" height="36" viewBox="0 0 122 36"><ellipse cx="61" cy="18" rx="59.500" ry="16" fill="none" stroke="#f07070" stroke-width="1.200"/></svg>
  </div>

</div>
</body>
</html>
```
FILE: styles.css
```css
* { box-sizing: border-box; }
html, body { margin: 0; padding: 0; }
body { width: 1240px; height: 923px; overflow: hidden; background: #ece9d8; font: 12px/14px "Noto Sans CJK SC", "Liberation Sans", sans-serif; color: #000; }
.defs { position: absolute; }
em { font: 10px/14px "DejaVu Sans Mono", "Liberation Mono", monospace; font-style: normal; white-space: pre; }
i { font-style: normal; }
.app { position: relative; width: 1240px; height: 923px; overflow: hidden; display: flex; flex-direction: column; }
.ic { width: 16px; height: 16px; flex: none; overflow: visible; }
.it { display: inline-flex; align-items: center; gap: 3px; white-space: nowrap; flex: none; }
.dis, .dis .it { color: #a8a8a0; }
.on { background: #e6ebf4; outline: 1px solid #316ac5; outline-offset: -1px; }
.dd { width: 0; height: 0; flex: none; border: 3px solid transparent; border-top: 4px solid #222; border-bottom: 0; }
.dd.dim { border-top-color: #b8b8b0; }
.sep { width: 1px; height: 18px; background: #c8c6b8; flex: none; }
.grip { width: 2px; height: 16px; flex: none; background: repeating-linear-gradient(#a8a8a0 0 2px, transparent 2px 4px); }

/* Top toolbar */
.top { height: 25px; flex: none; display: flex; align-items: center; background: #f3f1e6; overflow: hidden; }
.first { margin-left: -10px; }
.q-open { margin-left: 11px; }
.q-d1 { margin-left: 4px; }
.q-save { margin-left: 9px; }
.q-s1 { margin-left: 6px; }
.q-undo { margin-left: 7px; }
.q-d2 { margin-left: 6px; }
.q-redo { margin-left: 8px; }
.q-d3 { margin-left: 5px; }
.q-s2 { margin-left: 5px; }
.top .it { height: 22px; margin-left: 8px; }
.top .q-def { margin-left: 4px; }
.top .q-sig { margin-left: 9px; gap: 4px; }
.top .q-g9 { margin-left: 9px; }
.top .q-g4 { margin-left: 4px; }
.top .q-g5 { margin-left: 5px; }
.top .q-on { margin-left: 6px; padding: 0 3px; }
.sig { font: bold 14px "DejaVu Serif", serif; width: 14px; text-align: center; }
.top .box { background: #fff; width: 61px; padding: 0 3px; }
.top .fus { width: 61px; margin-left: 5px; gap: 5px; padding-right: 3px; }
.box .dd, .fus .dd { margin-left: auto; }

/* Layout */
.main { flex: 1; display: flex; min-height: 0; }
.nav { width: 155px; flex: none; display: flex; flex-direction: column; margin-right: 4px; }
.cap { height: 16px; flex: none; display: flex; align-items: center; font-size: 13px; white-space: nowrap; overflow: hidden; }
.cap.blue { background: #0a58e4; color: #fff; }
.cap.grey { background: #ece9d8; outline: 1px solid #8a8a80; outline-offset: -1px; }
.cap-t { flex: 1; }
.clip { margin-left: 1px; }
.pin { width: 12px; height: 12px; margin-right: 6px; flex: none; }
.cls { width: 14px; text-align: center; font-size: 13px; flex: none; margin-right: 1px; }
.navbtn { height: 23px; flex: none; display: flex; align-items: center; justify-content: center; background: #ebe8d8; border-bottom: 2px solid #a8a79a; }
.navtools { height: 26px; flex: none; display: flex; align-items: center; gap: 3px; }
.tree { height: 780px; flex: none; background: #fff; border: solid #7f9db9; border-width: 1px 2px 2px 0; }
.root, .leaf { height: 16px; display: flex; align-items: center; position: relative; white-space: nowrap; }
.root { padding-left: 15px; gap: 5px; }
.root::before { content: ""; position: absolute; left: 4px; top: 0; bottom: 0; border-left: 1px dotted #999; }
.root::after { content: ""; position: absolute; left: 5px; width: 10px; top: 8px; border-top: 1px dotted #999; }
.root.last::before { bottom: 8px; }
.ex { position: absolute; left: 0; top: 4px; width: 9px; height: 9px; background: #f4f3ea; border: 1px solid #888; font: 9px/7px "DejaVu Sans", sans-serif; text-align: center; z-index: 1; }
.kids { position: relative; }
.kids::before { content: ""; position: absolute; left: 4px; top: 0; bottom: 0; border-left: 1px dotted #999; }
.leaf { padding-left: 35px; gap: 4px; }
.leaf::before { content: ""; position: absolute; left: 24px; top: 0; bottom: 0; border-left: 1px dotted #999; }
.leaf:last-child::before { bottom: 8px; }
.leaf::after { content: ""; position: absolute; left: 25px; width: 10px; top: 8px; border-top: 1px dotted #999; }
.leaf em { margin-left: 3px; letter-spacing: -1px; }
.cur { background: #ece9d8; padding-right: 6px; }
.cadic { margin-left: 5px; }
.newb { font: bold 9px/9px "Liberation Sans", sans-serif; color: #000; background: #ffd800; padding: 0 1px; margin: -10px 0 0 -4px; }

.list { width: 165px; flex: none; display: flex; flex-direction: column; margin-right: 1px; }
.listtools { height: 26px; flex: none; display: flex; align-items: center; gap: 7px; padding: 0 0 0 5px; background: #f3f1e6; }
.search { height: 26px; flex: none; display: flex; align-items: center; gap: 3px; background: #f3f1e6; }
.sinput { width: 138px; height: 24px; background: #fff; border: 1px solid #7f9db9; color: #777; padding: 4px 2px; }
.sbtn { margin-left: 2px; }
.ltree { flex: 1; background: #fff; border: 1px solid #7f9db9; border-width: 1px 1px 0 1px; padding: 1px 0 0 9px; }
.lroot { height: 16px; display: flex; align-items: center; gap: 4px; position: relative; padding-left: 16px; }
.lroot .ex { left: 0; }
.lkid { height: 16px; display: flex; align-items: center; gap: 4px; padding-left: 33px; margin-top: 1px; }
.sel { background: #316ac5; width: 31px; height: 16px; display: flex; align-items: center; padding-left: 3px; }

.work { flex: 1; min-width: 0; display: flex; flex-direction: column; }
.bars { height: 77px; flex: none; display: flex; flex-direction: column; }
.tb { display: flex; align-items: center; background: #f7f6ee; border-radius: 3px; flex: none; white-space: nowrap; }
.r2 { height: 22px; margin: 2px 0 0 6px; width: 786px; padding-left: 1px; }
.r2 .grip { margin-right: 3px; }
.r2 .it + .it { margin-left: 8px; }
.r2 .sep { margin: 0 6px 0 7px; }
.rowpair { display: flex; justify-content: space-between; margin-top: 2px; padding-left: 6px; }
.r3 { height: 24px; width: 561px; gap: 3px; padding-left: 1px; }
.r3 .grip { margin-right: -2px; }
.r3b { height: 24px; width: 272px; gap: 6px; padding-left: 3px; overflow: hidden; }
.r3b .dd { margin-left: 5px; }
.r3 .it, .r4 .it { height: 24px; }
.w51 { width: 51px; padding: 0 4px; }
.w74 { width: 74px; padding: 0 4px; margin-left: 1px; }
.combo { display: flex; align-items: center; justify-content: space-between; height: 20px; background: #fff; padding-left: 2px; flex: none; }
.c1 { width: 57px; } .c2 { width: 68px; } .c3 { width: 70px; } .c4 { width: 71px; margin-right: 3px; }
.cb { width: 11px; height: 20px; background: #f0efe6; display: flex; align-items: center; justify-content: center; }
.r4 { height: 24px; margin: 2px 0 0 6px; width: 825px; padding-left: 1px; }
.r4 .it + .it { margin-left: 7px; }
.r4 .sep { margin: 0 7px 0 6px; }
.r4 .dd { margin-left: 3px; }
.r4 .dd.sd { margin-left: 4px; }
.r4 .sep { height: 18px; }
.sel1 { padding: 0 6px; width: 51px; margin-left: 1px; }
.canvas { height: 809px; flex: none; margin-left: 1px; }
.scene { display: block; }
.rebar { fill: none; stroke: #dccfb8; stroke-width: 1.200; opacity: .5; }
.edge { fill: none; stroke: #e4d0e8; stroke-width: 1.200; opacity: .75; }
.edgew { fill: none; stroke: #fff; stroke-width: 1.500; }
.axis { fill: none; stroke: #008000; stroke-width: 1; }
.nums text { font: 15px "Liberation Sans", sans-serif; fill: #dcdcdc; text-anchor: middle; }
.nums .ax { font-size: 14px; fill: #fff; }

.status { height: 23px; flex: none; display: flex; gap: 3px; padding: 1px 0 0 5px; overflow: hidden; }
.status .tb { height: 24px; align-items: flex-start; padding-top: 1px; overflow: hidden; }
.status .it { height: 22px; gap: 3px; align-items: flex-start; }
.status .grip { margin-right: 3px; }
.s1 { width: 204px; gap: 3px; padding-left: 1px; }
.s2 { width: 263px; padding-left: 3px; }
.s3 { width: 387px; padding-left: 3px; }
.w75 { width: 75px; padding: 0 3px; margin-left: 2px; }
.st1 { margin-left: 3px; }
.st2 { margin-left: 6px; width: 51px; padding: 0 4px; }
.st3 { width: 50px; padding: 0 4px; }
.st4 { margin-left: 4px; }
.st5 { margin-left: 9px; }
.sq { width: 14px; height: 12px; display: block; margin-top: 1px; }
.pk { background: #e0a0a0; }
.rd { border-left: 2px solid #c04040; border-right: 2px solid #c04040; }
.bl { border: 1px solid #3060c0; border-bottom: 0; }
.lab { width: 15px; color: #999; flex: none; }
.l1 { margin-left: 6px; }
.l2 { margin-left: 20px; }
.num { width: 58px; height: 20px; border: 1px solid #a8a8a0; background: #fafaf4; color: #999; text-align: center; flex: none; }
.wide2 { width: 68px; }
.s3 .sep { margin: 0 5px 0 17px; }
.cbx { width: 11px; height: 11px; border: 1px solid #888; margin-top: 2px; flex: none; }
.rlab { margin: 0 4px 0 8px; flex: none; }
.tick { width: 4px; height: 4px; border: 1px solid #555; margin: 4px 0 0 3px; flex: none; }
.sbox { width: 59px; margin-left: 3px; }

/* Floating control panel */
.panel { position: absolute; left: 328px; top: 104px; width: 173px; height: 140px; background: linear-gradient(#6d86dc, #8aa4ec); padding: 0 4px; border: 1px solid #6078d0; }
.ptitle { height: 21px; line-height: 22px; font-weight: 700; color: #dbe5fb; padding-left: 0; }
.plist { margin: 0; padding: 2px 0 0 4px; list-style: none; background: #fff; height: 113px; overflow: hidden; }
.plist li { height: 12px; line-height: 12px; display: flex; align-items: center; gap: 4px; white-space: nowrap; }
.chk { width: 10px; height: 10px; flex: none; border: 1px solid #9a9a90; background: linear-gradient(135deg, #e8e6da, #fff); position: relative; }
.chk::after { content: ""; position: absolute; left: 2px; top: 0; width: 4px; height: 6px; border: solid #1aa01a; border-width: 0 2px 2px 0; transform: rotate(45deg) scale(.8); }

/* Floating property dialog */
.dlg { position: absolute; left: 193px; top: 222px; width: 444px; height: 634px; background: #7f96e2; border: 1px solid #6a7ed8; display: flex; flex-direction: column; padding: 0 4px 4px 4px; }
.dtitle { height: 21px; flex: none; display: flex; align-items: center; justify-content: space-between; font-weight: 700; color: #dce6fb; background: linear-gradient(#6f88dc, #87a2ea); margin: 0 -4px; padding: 0 5px 0 3px; }
.dclose { width: 13px; height: 13px; background: #c06a78; border: 1px solid #eee; color: #fff; font: bold 12px/11px "DejaVu Sans", sans-serif; text-align: center; }
.dbody { flex: 1; background: #fff; display: flex; flex-direction: column; min-height: 0; }
.tblwrap { height: 431px; flex: none; display: flex; align-items: flex-start; padding-left: 1px; border-bottom: 1px solid #aab4d8; margin-bottom: 5px; background: #fff; }
.props { width: 414px; border-collapse: collapse; table-layout: fixed; flex: none; }
.c-n { width: 21px; } .c-a { width: 120px; }
.props th { height: 23px; font-weight: 400; background: linear-gradient(#f8f7f0, #e4e2d2); border: 1px solid #c0c0c0; border-top: 0; }
.props th.hv { background: linear-gradient(#fbdda2, #f0bf60); color: #800080; }
.props td { height: 19px; padding: 0; border: 1px solid #c0c0c0; white-space: nowrap; overflow: hidden; position: relative; }
.props tr td:first-child, .props tr th:first-child { border-left: 0; }
.n { background: linear-gradient(#f6f5ec, #ebe9da); text-align: center; font: 11px "DejaVu Sans Mono", monospace; }
.a { padding-left: 20px !important; }
.b { color: #00f; }
.v { color: #808080; padding-left: 2px !important; }
.g { color: #808080; padding-left: 2px !important; }
.pm { display: inline-block; width: 13px; height: 13px; border: 1px solid #999; background: #f4f3ea; color: #000; font: 12px/11px "DejaVu Sans", sans-serif; text-align: center; margin-right: 5px; vertical-align: -2px; }
.k { padding-left: 30px !important; }
.k::before { content: ""; position: absolute; left: 8px; top: 0; bottom: 0; border-left: 1px solid #c0c0c0; }
.k::after { content: ""; position: absolute; left: 8px; top: 9px; width: 17px; border-top: 1px solid #c0c0c0; }
.k.end::before { bottom: 9px; }
.k em { letter-spacing: -.5px; }
.steel { width: 10px; height: 10px; margin: 0 1px; vertical-align: -1px; }
.vscroll { width: 17px; flex: none; margin-left: 3px; display: flex; flex-direction: column; height: 429px; background: #f4f3ec; }
.sb { height: 17px; flex: none; background: linear-gradient(#dfe9fd, #b8cdf8); border: 1px solid #b0c0e8; border-radius: 2px; display: flex; align-items: center; justify-content: center; }
.track { height: 214px; flex: none; }
.thumb { height: 181px; flex: none; background: linear-gradient(90deg, #c9dafc, #b6ccfa); border: 1px solid #aabcf0; display: flex; align-items: center; justify-content: center; }
.gr { width: 7px; height: 7px; background: repeating-linear-gradient(#eef3ff 0 1px, #8ea6dc 1px 2px); }
.up, .down { width: 6px; height: 6px; border: solid #46588c; border-width: 2px 0 0 2px; transform: rotate(45deg); margin-top: 3px; }
.down { transform: rotate(225deg); margin: -3px 0 0; }
.preview { display: block; flex: none; }
.dim text { font: 13px "Liberation Sans", sans-serif; fill: #fff; text-anchor: middle; }
.oval { position: absolute; left: 137px; top: 378px; }
```
